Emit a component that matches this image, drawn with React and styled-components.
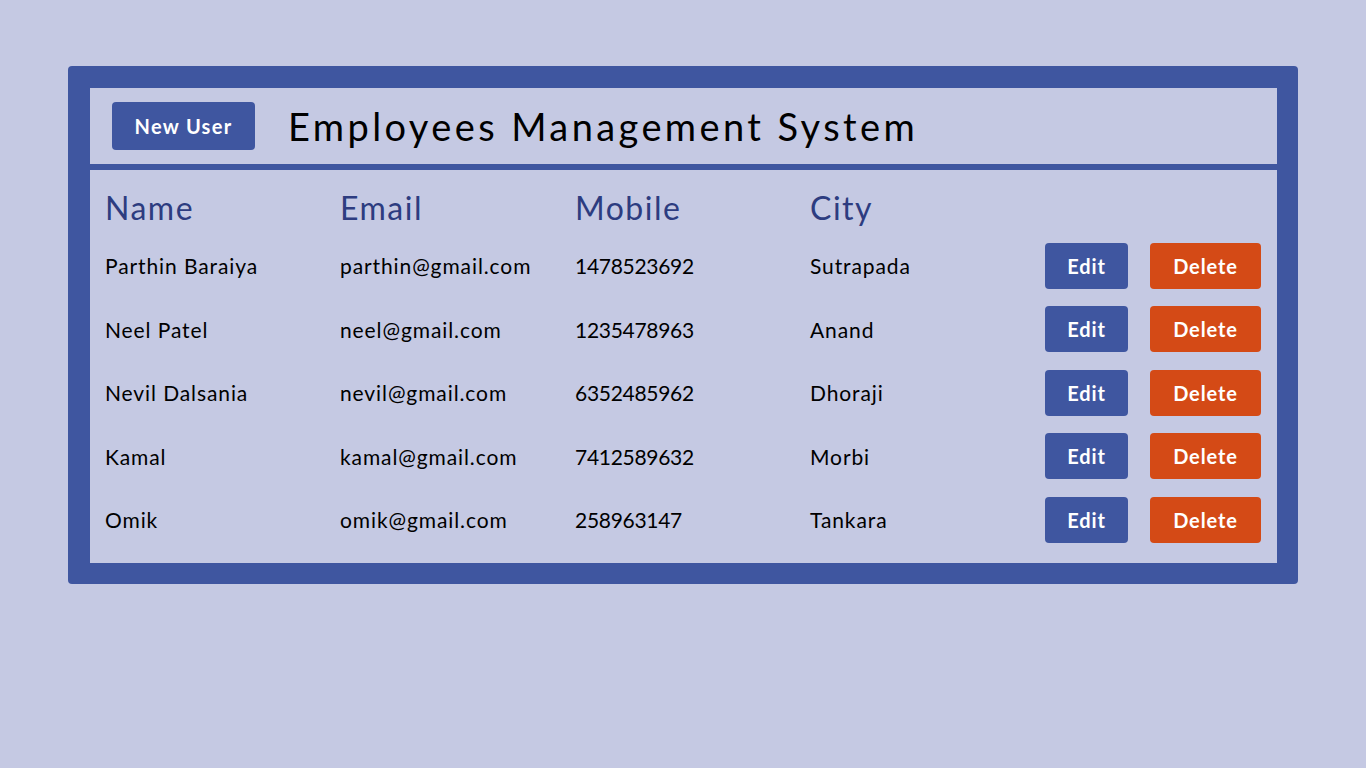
import React from "react";
import styled, { createGlobalStyle } from "styled-components";

const GlobalStyle = createGlobalStyle`
  body {
    margin: 0;
    background: #c5c9e3;
    font-family: Lato, "Open Sans", sans-serif;
  }
`;

const Page = styled.div`
  width: 100vw;
  height: 100vh;
  padding: 66px 68px 0 68px;
  box-sizing: border-box;
`;

const Card = styled.div`
  background: #3f56a0;
  border-radius: 4px;
  padding: 22px 21px 21px 22px;
  display: flex;
  flex-direction: column;
  gap: 6px;
`;

const Header = styled.div`
  background: #c5c9e3;
  height: 76px;
  display: flex;
  align-items: center;
  padding-left: 22px;
  gap: 33px;
`;

const Button = styled.button`
  border: none;
  border-radius: 4px;
  background: ${(p) => (p.$danger ? "#d44a16" : "#3f56a0")};
  color: #fff;
  font-family: Lato, sans-serif;
  font-weight: 700;
  font-size: 20px;
  letter-spacing: ${(p) => (p.$big ? "1.3px" : "0.9px")};
  width: ${(p) => p.$w}px;
  height: ${(p) => p.$h}px;
  cursor: pointer;
  padding: 0;
`;

const Title = styled.h1`
  margin: 0;
  font-weight: 400;
  font-size: 38px;
  letter-spacing: 3.4px;
  color: #000;
`;

const Panel = styled.div`
  background: #c5c9e3;
  padding: 14px 16px 11px 15px;
`;

const Grid = styled.div`
  display: grid;
  grid-template-columns: 235px 235px 235px 235px 1fr;
`;

const Head = styled.div`
  height: 50px;
  display: flex;
  align-items: center;
  padding-bottom: 3px;
  box-sizing: border-box;
  font-size: 32px;
  letter-spacing: 1.5px;
  color: #2d3c80;
`;

const Cell = styled.div`
  height: 63.5px;
  display: flex;
  align-items: center;
  font-size: 21px;
  letter-spacing: ${(p) => (p.$num ? "-0.3px" : "0.9px")};
  color: #000;
`;

const Actions = styled(Cell)`
  gap: 22px;
  letter-spacing: normal;
`;

const users = [
  ["Parthin Baraiya", "parthin@gmail.com", "1478523692", "Sutrapada"],
  ["Neel Patel", "neel@gmail.com", "1235478963", "Anand"],
  ["Nevil Dalsania", "nevil@gmail.com", "6352485962", "Dhoraji"],
  ["Kamal", "kamal@gmail.com", "7412589632", "Morbi"],
  ["Omik", "omik@gmail.com", "258963147", "Tankara"],
];

export default function App() {
  return (
    <Page>
      <GlobalStyle />
      <Card>
        <Header>
          <Button $w={143} $h={48} $big>New User</Button>
          <Title>Employees Management System</Title>
        </Header>
        <Panel>
          <Grid>
            <Head>Name</Head>
            <Head>Email</Head>
            <Head>Mobile</Head>
            <Head>City</Head>
            <Head />
            {users.map((u) => (
              <React.Fragment key={u[1]}>
                <Cell>{u[0]}</Cell>
                <Cell>{u[1]}</Cell>
                <Cell $num>{u[2]}</Cell>
                <Cell>{u[3]}</Cell>
                <Actions>
                  <Button $w={83} $h={46}>Edit</Button>
                  <Button $w={111} $h={46} $danger>Delete</Button>
                </Actions>
              </React.Fragment>
            ))}
          </Grid>
        </Panel>
      </Card>
    </Page>
  );
}
